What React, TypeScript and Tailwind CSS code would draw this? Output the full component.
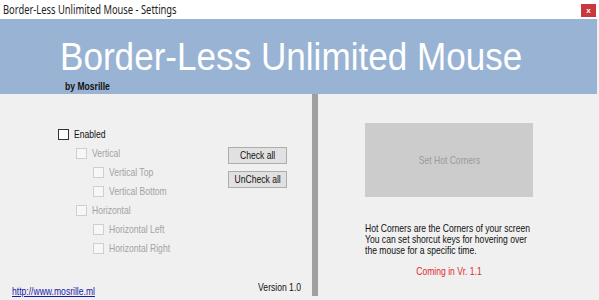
import React from "react";

const options = [
  { label: "Vertical", indent: 1 },
  { label: "Vertical Top", indent: 2 },
  { label: "Vertical Bottom", indent: 2 },
  { label: "Horizontal", indent: 1 },
  { label: "Horizontal Left", indent: 2 },
  { label: "Horizontal Right", indent: 2 },
];

// the old WinForms font is much narrower than Arial, so squeeze text horizontally
function Narrow({
  children,
  origin = "left",
  className = "",
}: {
  children: React.ReactNode;
  origin?: "left" | "center" | "right";
  className?: string;
}) {
  const o = origin === "left" ? "origin-left" : origin === "right" ? "origin-right" : "origin-center";
  return <span className={`inline-block whitespace-nowrap scale-x-[0.78] ${o} ${className}`}>{children}</span>;
}

function CheckRow({ label, indent, disabled }: { label: string; indent: number; disabled?: boolean }) {
  const pad = indent === 0 ? "pl-0" : indent === 1 ? "pl-[18px]" : "pl-[35px]";
  return (
    <div className={`flex h-[19px] items-center ${pad}`}>
      <span
        className={`h-[11px] w-[11px] shrink-0 border ${
          disabled ? "border-[#cfcfcf] bg-[#f7f7f7]" : "border-[#333333] bg-white"
        }`}
      />
      <Narrow className={`ml-[5px] ${disabled ? "text-[#a3a3a3]" : "text-[#111111]"}`}>{label}</Narrow>
    </div>
  );
}

export default function App() {
  return (
    <div
      className="flex h-[300px] w-[599px] flex-col overflow-hidden bg-[#f0f0f0] text-[11px]"
      style={{ fontFamily: '"Liberation Sans", Arial, sans-serif' }}
    >
      {/* title bar */}
      <div className="flex h-[19px] items-center justify-between bg-white pl-[3px] pr-[3px]">
        <Narrow className="text-[12px] text-[#222222]">
          <span style={{ fontFamily: '"Noto Sans", sans-serif' }}>Border-Less Unlimited Mouse - Settings</span>
        </Narrow>
        <span className="mt-[2px] flex h-[13px] w-[15px] items-center justify-center bg-[#c9383c] text-[8px] font-bold leading-none text-white">
          x
        </span>
      </div>

      {/* header */}
      <div className="mr-[2px] flex h-[75px] flex-col bg-[#98b3d3] pl-[60px] pt-[17px]">
        <div className="origin-left scale-x-[0.9] whitespace-nowrap text-[39px] leading-[42px] text-white">
          Border-Less Unlimited Mouse
        </div>
        <div className="ml-[5px] text-[11px] font-bold text-[#111111]">
          <Narrow>by Mosrille</Narrow>
        </div>
      </div>

      {/* body */}
      <div className="flex flex-1">
        <div className="flex w-[312px] flex-col justify-between pb-[1px]">
          <div className="flex pl-[58px] pt-[31px]">
            <div className="w-[170px]">
              <CheckRow label="Enabled" indent={0} />
              {options.map((o) => (
                <CheckRow key={o.label} label={o.label} indent={o.indent} disabled />
              ))}
            </div>
            <div className="mt-[22px] flex flex-col gap-[7px]">
              <button className="flex h-[17px] w-[59px] items-center justify-center border border-[#adadad] bg-[#e1e1e1] text-[11px] leading-none text-[#111111]">
                <Narrow origin="center">Check all</Narrow>
              </button>
              <button className="flex h-[17px] w-[59px] items-center justify-center border border-[#adadad] bg-[#e1e1e1] text-[11px] leading-none text-[#111111]">
                <Narrow origin="center">UnCheck all</Narrow>
              </button>
            </div>
          </div>
          <div className="flex items-end justify-between pl-[12px] pr-[11px]">
            <a href="#" className="text-[#1a1aa6]">
              <Narrow className="underline">http://www.mosrille.ml</Narrow>
            </a>
            <span className="mb-[4px] text-[#111111]">
              <Narrow origin="right">Version 1.0</Narrow>
            </span>
          </div>
        </div>

        <div className="mb-[4px] w-[6px] bg-[#a0a0a0]" />

        <div className="flex flex-1 flex-col pl-[47px] pt-[29px]">
          <div className="flex h-[74px] w-[168px] items-center justify-center bg-[#cccccc] text-[#9a9a9a]">
            <Narrow origin="center">Set Hot Corners</Narrow>
          </div>
          <div className="mt-[26px] flex w-[168px] flex-col leading-[11px] text-[#111111]">
            <Narrow>Hot Corners are the Corners of your screen</Narrow>
            <Narrow>You can set shorcut keys for hovering over</Narrow>
            <Narrow>the mouse for a specific time.</Narrow>
            <div className="mt-[10px] text-center text-[#e02b2b]">
              <Narrow origin="center">Coming in Vr. 1.1</Narrow>
            </div>
          </div>
        </div>
      </div>
    </div>
  );
}
